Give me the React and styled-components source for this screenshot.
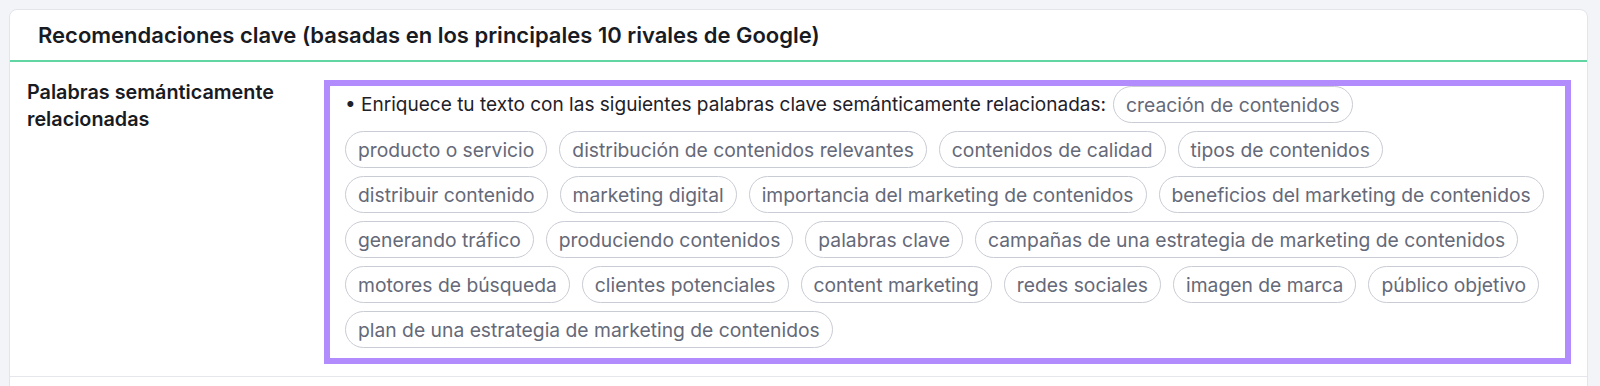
import React from "react";
import styled, { createGlobalStyle } from "styled-components";

const Global = createGlobalStyle`
  html, body { margin: 0; padding: 0; background: #f3f4f8; }
  body { font-family: Inter, "Noto Sans", sans-serif; -webkit-font-smoothing: antialiased; }
`;

const Page = styled.div`
  padding: 9px 12px 0 9px;
  height: 386px;
  box-sizing: border-box;
  overflow: hidden;
`;

const Card = styled.section`
  background: #ffffff;
  border: 1px solid #e4e5ea;
  border-radius: 8px 8px 0 0;
  min-height: 420px;
`;

const Header = styled.header`
  height: 50px;
  display: flex;
  align-items: center;
  padding: 0 28px;
  border-bottom: 2px solid #61d6a3;
`;

const Title = styled.h2`
  margin: 0;
  font-size: 22px;
  font-weight: 600;
  color: #191b23;
`;

const Row = styled.div`
  display: grid;
  grid-template-columns: 297px 1fr;
  padding: 18px 16px 12px 17px;
  border-bottom: 1px solid #e6e7ec;
`;

const Label = styled.div`
  margin-top: -1px;
  font-size: 19.8px;
  line-height: 27px;
  font-weight: 600;
  color: #191b23;
`;

const Highlight = styled.div`
  border: 6px solid #b28cfd;
  padding: 0 16px 10px 15px;
`;

const Flow = styled.div`
  display: flex;
  flex-wrap: wrap;
  align-items: center;
  column-gap: 12px;
  row-gap: 8px;
`;

const Lead = styled.span`
  font-size: 19.05px;
  color: #1f2128;
  margin-right: -5px;
  white-space: nowrap;
`;

const Chip = styled.span`
  display: inline-flex;
  align-items: center;
  height: 37px;
  box-sizing: border-box;
  padding: 0 12px;
  border: 1px solid #c9ccd4;
  border-radius: 19px;
  font-size: 19.3px;
  color: #656978;
  white-space: nowrap;
`;

const words = [
  "creación de contenidos",
  "producto o servicio",
  "distribución de contenidos relevantes",
  "contenidos de calidad",
  "tipos de contenidos",
  "distribuir contenido",
  "marketing digital",
  "importancia del marketing de contenidos",
  "beneficios del marketing de contenidos",
  "generando tráfico",
  "produciendo contenidos",
  "palabras clave",
  "campañas de una estrategia de marketing de contenidos",
  "motores de búsqueda",
  "clientes potenciales",
  "content marketing",
  "redes sociales",
  "imagen de marca",
  "público objetivo",
  "plan de una estrategia de marketing de contenidos",
];

export default function App() {
  return (
    <>
      <Global />
      <Page>
        <Card>
          <Header>
            <Title>Recomendaciones clave (basadas en los principales 10 rivales de Google)</Title>
          </Header>
          <Row>
            <Label>
              Palabras semánticamente
              <br />
              relacionadas
            </Label>
            <Highlight>
              <Flow>
                <Lead>• Enriquece tu texto con las siguientes palabras clave semánticamente relacionadas:</Lead>
                {words.map((w) => (
                  <Chip key={w}>{w}</Chip>
                ))}
              </Flow>
            </Highlight>
          </Row>
        </Card>
      </Page>
    </>
  );
}
